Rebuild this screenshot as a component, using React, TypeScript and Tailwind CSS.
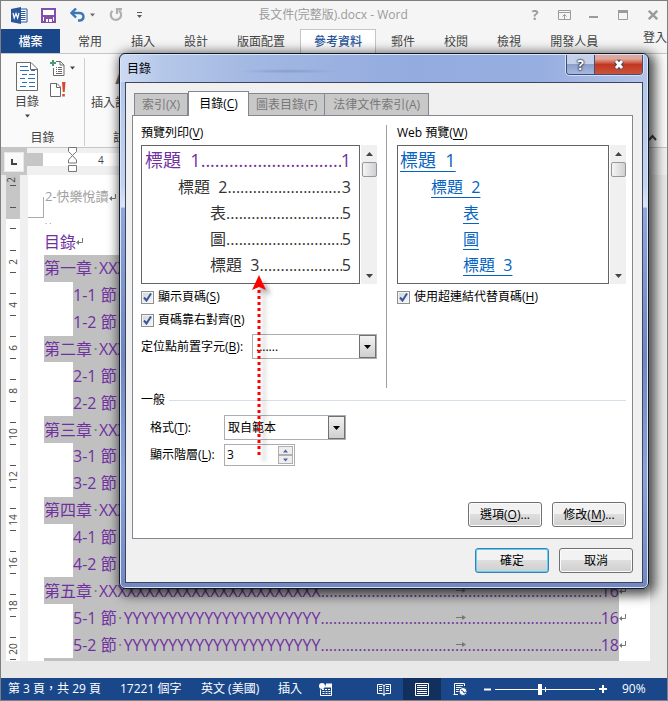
import { ReactNode, useState } from "react";
import clsx from "clsx";

const ribbonTabs = ["常用", "插入", "設計", "版面配置", "參考資料", "郵件", "校閱", "檢視", "開發人員"];

const chapters = [
  { name: "第一章", no: 1, page: 1, subPages: [1, 2] },
  { name: "第二章", no: 2, page: 4, subPages: [4, 6] },
  { name: "第三章", no: 3, page: 8, subPages: [8, 10] },
  { name: "第四章", no: 4, page: 12, subPages: [12, 14] },
  { name: "第五章", no: 5, page: 16, subPages: [16, 18] },
];

const dialogTabs = [
  { label: "索引", hotkey: "X" },
  { label: "目錄", hotkey: "C" },
  { label: "圖表目錄", hotkey: "F" },
  { label: "法律文件索引", hotkey: "A" },
];

const previewRows = [
  { text: "標題  1", page: 1, style: "h-[28px] pl-[3px] text-lg text-[#7030a0]", web: "h-[28px] pl-[2px] text-lg" },
  { text: "標題  2", page: 3, style: "h-[26px] pl-[36px] text-base", web: "h-[26px] pl-[33px] text-base" },
  { text: "表", page: 5, style: "h-[26px] pl-[68px] text-base", web: "h-[26px] pl-[65px] text-base" },
  { text: "圖", page: 5, style: "h-[26px] pl-[68px] text-base", web: "h-[26px] pl-[65px] text-base" },
  { text: "標題  3", page: 5, style: "h-[26px] pl-[68px] text-base", web: "h-[26px] pl-[65px] text-base" },
];

const dots = ".".repeat(200);

function Caret({ className }: { className?: string }) {
  return (
    <svg width="7" height="4" viewBox="0 0 7 4" className={className} aria-hidden="true">
      <path d="M0 0h7L3.500 4z" fill="currentColor" />
    </svg>
  );
}

function Hotkey({ label, hotkey, tail = "" }: { label: string; hotkey: string; tail?: string }) {
  return (
    <>
      {label}(<span className="underline underline-offset-2">{hotkey}</span>){tail}
    </>
  );
}

function TitleBar() {
  return (
    <header className="flex h-7 shrink-0 items-center bg-[#f5f5f5] text-[#9b9b9b]">
      <svg width="17" height="17" viewBox="0 0 17 17" className="ml-[10px]" aria-hidden="true">
        <path d="M8 2h8v13H8z" fill="#fff" stroke="#2b579a" />
        <path d="M10 4.500h4.500M10 6.500h4.500M10 8.500h4.500M10 10.500h4.500M10 12.500h4.500" stroke="#2b579a" />
        <path d="M0 2 10 0v17L0 15z" fill="#2b579a" />
        <path d="m2 6 1.200 5L5 6.500 6.600 11 8 6" fill="none" stroke="#fff" strokeWidth="1.200" />
      </svg>
      <button aria-label="儲存檔案" className="ml-[13px]">
        <svg width="15" height="15" viewBox="0 0 15 15">
          <path d="M1 1h13v13H1z" fill="#fff" stroke="#8250aa" strokeWidth="2" />
          <path d="M1 7h13v2H1zM3 9h9v5H3z" fill="#8250aa" />
          <path d="M5 11h2v3H5zM8 11h3v3H8z" fill="#fff" />
        </svg>
      </button>
      <button aria-label="復原" className="ml-[14px] flex items-center text-[#6a6a6a]">
        <svg width="15" height="14" viewBox="0 0 15 14">
          <path d="M2 5h7c6 0 5.500 7 1 7.500H8" fill="none" stroke="#3b76b5" strokeWidth="2.400" />
          <path d="M6 .500 1.500 5 6 9.500" fill="none" stroke="#3b76b5" strokeWidth="2.400" />
        </svg>
        <Caret className="ml-[5px] w-[5px]" />
      </button>
      <button aria-label="取消復原" className="ml-[14px]">
        <svg width="14" height="14" viewBox="0 0 14 14">
          <path d="M3.500 2.800A5.200 5.200 0 1 0 10 2.500" fill="none" stroke="#b0b0b0" strokeWidth="2.200" />
          <path d="M8 6V1.200h5" fill="none" stroke="#b0b0b0" strokeWidth="2.200" />
        </svg>
      </button>
      <button aria-label="自訂快速存取工具列" className="ml-[14px] text-[#5a5a5a]">
        <svg width="5" height="6" viewBox="0 0 5 6">
          <path d="M0 0h5v1H0zM0 3h5L2.500 6z" fill="currentColor" />
        </svg>
      </button>
      <h1 className="flex-1 pl-1 text-center text-xs">長文件(完整版).docx - Word</h1>
      <div className="flex items-center">
        <button aria-label="說明" className="w-[30px] text-sm leading-4 font-bold">?</button>
        <button aria-label="功能區顯示選項" className="flex w-[29px] justify-center">
          <svg width="13" height="10" viewBox="0 0 13 10" fill="none" stroke="currentColor">
            <path d="M.500.500h12v9H.500zM.500 2.500h12M6.500 9V4.500M4.500 6.500l2-2 2 2" />
          </svg>
        </button>
        <button aria-label="最小化" className="flex w-[29px] justify-center">
          <svg width="9" height="10" viewBox="0 0 9 10"><path d="M0 6h9v2H0z" fill="currentColor" /></svg>
        </button>
        <button aria-label="最大化" className="flex w-[30px] justify-center">
          <svg width="10" height="10" viewBox="0 0 10 10"><path d="M.500 2v7.500h9V2" fill="none" stroke="currentColor" /><path d="M0 0h10v3H0z" fill="currentColor" /></svg>
        </button>
        <button aria-label="關閉" className="flex w-[29px] justify-center">
          <svg width="10" height="10" viewBox="0 0 10 10"><path d="m.800.800 8.400 8.400M9.200.800.800 9.200" stroke="currentColor" strokeWidth="2.400" /></svg>
        </button>
      </div>
    </header>
  );
}

function RibbonTabs() {
  return (
    <nav className="flex h-[25px] shrink-0 overflow-hidden border-b border-[#c6c6c6] bg-[#f5f5f5] text-xs">
      <button className="mr-1 h-[25px] w-[59px] shrink-0 bg-[#19478a] font-medium text-white">檔案</button>
      <div className="flex gap-px">
        {ribbonTabs.map((tab) => (
          <button
            key={tab}
            className={clsx(
              "h-[26px] shrink-0 pb-px",
              tab === "參考資料" ? "border border-[#c6c6c6] bg-white px-[13px] font-medium text-[#2b579a]" : "px-[14px] text-[#444]",
            )}
          >
            {tab}
          </button>
        ))}
      </div>
      <button className="ml-auto h-[18px] w-6 whitespace-nowrap text-left text-[#444]">登入</button>
    </nav>
  );
}

function Ribbon() {
  return (
    <section className="flex h-[94px] shrink-0 items-start overflow-hidden border-b border-[#c6c6c6] bg-[#fafafa] text-xs leading-4 text-[#444]">
      <div className="mt-1 flex h-[88px] w-[84px] shrink-0 flex-col justify-between border-r border-[#d0d0d0]">
        <div className="flex">
          <button className="mt-1 ml-[11px] flex w-[30px] flex-col items-center">
            <svg width="22" height="29" viewBox="0 0 22 29" fill="none" aria-hidden="true">
              <path d="M.500.500H15L21.500 7v21.500H.500z" fill="#fff" stroke="#6a6a6a" />
              <path d="M14.500.500V7.500h7" stroke="#6a6a6a" />
              <path d="M4 4.500h8M4 8.500h9M6 12.500h5M4 16.500h5M6 20.500h5M4 24.500h6" stroke="#2b72b8" strokeWidth="1.200" />
              <path d="M15 8.500h4M13 12.500h6M12 16.500h7M13 20.500h6M13 24.500h6" stroke="#2b72b8" strokeWidth="1.200" />
            </svg>
            <span className="mt-[3px] whitespace-nowrap">目錄</span>
            <Caret className="mt-[4px] w-[5px]" />
          </button>
          <div className="ml-2 flex flex-col gap-[6px]">
            <button aria-label="新增文字" className="flex items-center gap-[5px] pt-[2px]">
              <svg width="15" height="16" viewBox="0 0 15 16" fill="none">
                <path d="M6 1.500h4.500L14 5v10.500H3.500V8" fill="#fff" stroke="#6a6a6a" />
                <path d="M10 1.500V5h4" stroke="#6a6a6a" />
                <path d="M6 7.500h1M8 7.500h4M6 9.500h1M8 9.500h4M6 11.500h1M8 11.500h4M6 13.500h6" stroke="#6a6a6a" />
                <path d="M3 0v6M0 3h6" stroke="#4a9c74" strokeWidth="2" />
              </svg>
              <Caret className="w-[5px]" />
            </button>
            <button aria-label="更新目錄">
              <svg width="16" height="15" viewBox="0 0 16 15" fill="none">
                <path d="M.500 1.500H7L10.500 5v9.500H.500z" fill="#fff" stroke="#6a6a6a" />
                <path d="M6.500 1.500V5.500h4" stroke="#6a6a6a" />
                <path d="M12 0h3.500l-.800 10h-1.900zM12.300 12h2.500v2.500h-2.500z" fill="#d8482a" />
              </svg>
            </button>
          </div>
        </div>
        <p className="text-center">目錄</p>
      </div>
      <div className="mt-1 flex h-[88px] w-20 flex-col items-center justify-between whitespace-nowrap">
        <button className="flex flex-col items-center">
          <span className="-mr-2 text-xl leading-[37px] font-bold text-[#6a6a6a]">AB</span>
          <span className="pr-5">插入註腳</span>
        </button>
        <p>註腳</p>
      </div>
      <button aria-label="摺疊功能區" className="mt-20 ml-auto pr-[10px]">
        <svg width="9" height="7" viewBox="0 0 9 7"><path d="m1 6 3.500-4L8 6" fill="none" stroke="#444" strokeWidth="2" /></svg>
      </button>
    </section>
  );
}

function VerticalRuler() {
  return (
    <div className="ml-[5px] w-[14px] shrink-0 overflow-hidden bg-white text-[10px] text-[#444] contain-size">
      <div className="flex h-11 flex-col items-center bg-[#c6c6c6]">
        <span className="h-[10px] -rotate-90 leading-[6px]">2</span>
        <span className="h-[22px] w-[6px] border-t border-[#555]" />
        <span className="w-[6px] border-t border-[#555]" />
      </div>
      <div className="mx-auto mt-[9px] h-[22px] w-[6px] border-t border-[#555]" />
      {[2, 4, 6, 8, 10, 12, 14, 16, 18, 20].map((n) => (
        <div key={n} className="h-[43px]">
          <div className="mx-auto w-[6px] border-t border-[#555]" />
          <div className="flex h-[21px] items-center justify-center"><span className="-rotate-90 leading-none">{n}</span></div>
          <div className="mx-auto w-[6px] border-t border-[#555]" />
        </div>
      ))}
    </div>
  );
}

function HorizontalRuler() {
  return (
    <div className="flex h-[27px] shrink-0 bg-[#f0f0f0]">
      <button aria-label="定位點" className="w-[26px] bg-[#c6c6c6] p-[3px]">
        <span className="flex h-[20px] items-center justify-center border border-[#e8e8e8] bg-[#fafafa]">
          <svg width="6" height="6" viewBox="0 0 6 6"><path d="M1 0v5h5" fill="none" stroke="#444" strokeWidth="2" /></svg>
        </span>
      </button>
      <div className="mt-[5px] flex h-[13px] flex-1 items-center bg-white text-[10px] leading-none text-[#444]">
        <div className="h-full w-4 bg-[#c6c6c6]" />
        <svg width="11" height="25" viewBox="0 0 11 25" className="ml-[24px] shrink-0" fill="#fff" stroke="#777">
          <path d="M1.500.500h8v4l-4 4-4-4zM5.500 8.500 1.500 13v3h8v-3zM1.500 18.500h8v6h-8z" />
        </svg>
        <span className="ml-[20px]">4</span>
      </div>
      <div className="w-[17px]" />
    </div>
  );
}

function Return({ className }: { className?: string }) {
  return (
    <span className={clsx("inline-flex shrink-0 items-center text-[#777]", className)}>
      <svg width="7" height="7" viewBox="0 0 7 7" aria-hidden="true">
        <path d="M6.500 0v4.500H2" fill="none" stroke="currentColor" /><path d="M3 2v5L0 4.500z" fill="currentColor" />
      </svg>
    </span>
  );
}

function TocLine({ children, page, sub }: { children: ReactNode; page: number; sub?: boolean }) {
  return (
    <a href="#toc" className={clsx("flex min-h-[26px]", sub ? "pl-[45px]" : "pl-4")}>
      <span className="flex min-w-0 flex-1 items-center bg-[#c0c0c0]">
        <span className="shrink-0 whitespace-pre">{children}</span>
        <span className="relative flex h-5 min-w-0 flex-1 items-center justify-center leading-5">
          <span className="h-5 w-full overflow-hidden">{dots}</span>
          <svg width="10" height="5" viewBox="0 0 10 5" className="absolute" aria-hidden="true">
            <path d="M0 2.500h8" stroke="#777" /><path d="M6 0v5l4-2.500z" fill="#777" />
          </svg>
        </span>
        <span className="shrink-0">{page}</span>
      </span>
      <Return className="w-[31px] self-center" />
    </a>
  );
}

function Mark() {
  return <span className="inline-block w-[7px] text-center text-[#777]">·</span>;
}

function DocumentPage() {
  return (
    <article className="flex min-w-0 flex-1 flex-col overflow-hidden bg-white text-base leading-none text-[#7030a0]">
      <div className="mt-3 flex h-[31px] shrink-0">
        <div className="h-[21px] w-4 self-end border-r border-b border-[#aaa]" />
        <p className="pl-px text-[13px] leading-[18px] text-[#a0a0a0]">2-快樂悅讀<Return /></p>
      </div>
      <p className="h-[10px] shrink-0 pl-[17px] text-[8px] leading-[6px] text-[#777]">. .</p>
      <h2 className="flex h-[27px] shrink-0 items-center pl-4">目錄<Return /></h2>
      <div id="toc" className="grid flex-1 auto-rows-fr grid-cols-1">
        {chapters.map((ch) => [
          <TocLine key={ch.name} page={ch.page}>{ch.name}<Mark />{"X".repeat(24)}</TocLine>,
          ...ch.subPages.map((page, i) => (
            <TocLine key={`${ch.no}-${i + 1}`} page={page} sub>{ch.no}-{i + 1} 節<Mark />{"Y".repeat(22)}</TocLine>
          )),
        ])}
      </div>
      <div className="mr-[31px] ml-4 h-[3px] shrink-0 bg-[#c0c0c0]" />
    </article>
  );
}

function CheckField({ label, hotkey }: { label: string; hotkey: string }) {
  const [checked, setChecked] = useState(true);
  return (
    <label className="flex h-4 items-center gap-1">
      <span className="grid size-[13px] place-items-center">
        <input
          type="checkbox"
          checked={checked}
          onChange={(e) => setChecked(e.target.checked)}
          className="col-start-1 row-start-1 size-[13px] appearance-none border border-[#8e8f8f] bg-linear-to-br from-[#d0d5dc] to-[#f8f8f8] shadow-[inset_0_0_0_1px_#f4f4f4]"
        />
        {checked && (
          <svg width="9" height="9" viewBox="0 0 9 9" className="pointer-events-none col-start-1 row-start-1">
            <path d="m1 4.500 2.500 3L8 .500" fill="none" stroke="#3a5595" strokeWidth="2" />
          </svg>
        )}
      </span>
      <span><Hotkey label={label} hotkey={hotkey} /></span>
    </label>
  );
}

function Combo({ id, value, className }: { id: string; value: string; className: string }) {
  return (
    <div className={clsx("flex h-[25px] border border-[#abadb3] bg-white", className)}>
      <select id={id} className="min-w-0 flex-1 appearance-none pl-[3px] outline-none">
        <option>{value}</option>
      </select>
      <label htmlFor={id} className="flex w-[17px] items-center justify-center border border-[#707070] bg-linear-to-b from-[#f2f2f2] to-[#cfcfcf]">
        <Caret />
      </label>
    </div>
  );
}

function ScrollBar() {
  return (
    <div className="ml-px flex w-4 shrink-0 flex-col items-center bg-[#f0f0f0]">
      <button aria-label="向上捲動" className="flex h-[17px] items-center"><Caret className="w-[7px] rotate-180 text-[#444]" /></button>
      <div className="h-[15px] w-[15px] rounded-xs border border-[#979797] bg-linear-to-r from-[#f5f5f5] to-[#d0d0d4]" />
      <button aria-label="向下捲動" className="mt-auto flex h-[17px] items-center"><Caret className="w-[7px] text-[#444]" /></button>
    </div>
  );
}

function PushButton({ children, primary }: { children: ReactNode; primary?: boolean }) {
  return (
    <button
      className={clsx(
        "h-[25px] w-[74px] rounded-[3px] border bg-linear-to-b from-[#f2f2f2] from-50% via-[#dedede] via-50% to-[#cfcfcf]",
        primary ? "border-[#3c7fb1] shadow-[inset_0_0_0_1px_#5fd0f2]" : "border-[#707070] shadow-[inset_0_0_0_1px_#fbfbfb]",
      )}
    >
      {children}
    </button>
  );
}

function TocDialog() {
  const [levels, setLevels] = useState(3);
  return (
    <section
      role="dialog"
      aria-label="目錄"
      className="absolute top-[52px] right-[18px] left-[118px] rounded-md border border-[#101828] bg-[linear-gradient(180deg,#b0c4e8_0px,#c3d2ee_130px,#dbe6f8_153px,#8fa8dc_154px,#6f86be_300px,#8aa4d8_420px,#7388c0)] px-[5px] pb-[5px] text-xs leading-4 text-black shadow-[3px_3px_12px_3px_rgba(0,0,0,0.7),inset_0_0_0_1px_#d8e4f8]"
    >
      <div className="-mx-1 mt-px flex h-[27px] items-start rounded-t bg-[radial-gradient(ellipse_at_32%_60%,#869dcf_0,transparent_10%),linear-gradient(90deg,#cddaf2,#b5c7e9_8%,#a3b8e2_25%,#93abdf_55%,#97aee0_80%,#b4c4e8)]">
        <h2 className="pt-[6px] pl-1.5">目錄</h2>
        <div className="mr-1 ml-auto flex h-5 overflow-hidden rounded-b border border-t-0 border-[#3f4e78] text-white shadow-[0_0_0_1px_#d5e0f5]">
          <button aria-label="說明" className="w-7 border-r border-[#3f4e78] bg-linear-to-b from-[#c5d1ea] from-50% via-[#8c9fca] via-50% to-[#a7b9df] text-sm leading-[18px] font-bold [text-shadow:0_0_2px_#000,0_0_2px_#000]">?</button>
          <button aria-label="關閉" className="flex w-[47px] items-center justify-center bg-linear-to-b from-[#e0a79c] from-20% via-[#c2361f] via-50% to-[#c9543c]">
            <svg width="12" height="11" viewBox="0 0 12 11">
              <path d="m3 2 6 7M9 2 3 9" stroke="#444a60" strokeWidth="5" />
              <path d="m3 2 6 7M9 2 3 9" stroke="#fff" strokeWidth="2.800" />
            </svg>
          </button>
        </div>
      </div>
      <div className="border border-[#3c4560] bg-[#f0f0f0] pt-2 pr-[9px] pb-[9px] pl-1.5">
        <div role="tablist" className="relative -mb-px flex h-[25px] items-end pl-[2px]">
          {dialogTabs.map((tab) =>
            tab.hotkey === "C" ? (
              <button key={tab.label} role="tab" aria-selected="true" className="h-[25px] w-[61px] border border-b-0 border-[#828790] bg-white">
                <Hotkey label={tab.label} hotkey={tab.hotkey} />
              </button>
            ) : (
              <button key={tab.label} role="tab" aria-selected="false" className="h-[23px] border border-[#828790] bg-[#c8c8c8] px-[7px] text-[#777] not-first:border-l-0 last:px-2">
                {tab.label}({tab.hotkey})
              </button>
            ),
          )}
        </div>
        <div className="border border-[#828790] bg-white pt-[9px] pr-1.5 pb-[11px] pl-2">
          <div className="grid grid-cols-[245px_1fr]">
            <div className="pr-[9px] pb-[29px]">
              <p className="mb-1"><Hotkey label="預覽列印" hotkey="V" /></p>
              <div className="flex h-[139px]">
                <div className="min-w-0 flex-1 overflow-hidden border border-[#646464] pr-2 text-[#333]">
                  {previewRows.map((row) => (
                    <div key={row.text} className={clsx("flex items-center leading-6", row.style)}>
                      <span className="shrink-0 whitespace-pre">{row.text}</span>
                      <span className="h-6 min-w-0 flex-1 overflow-hidden leading-6">{dots}</span>
                      <span>{row.page}</span>
                    </div>
                  ))}
                </div>
                <ScrollBar />
              </div>
              <div className="mt-[5px] mb-1.5 flex flex-col gap-[7px]">
                <CheckField label="顯示頁碼" hotkey="S" />
                <CheckField label="頁碼靠右對齊" hotkey="R" />
              </div>
              <div className="flex items-center justify-between">
                <label htmlFor="leader"><Hotkey label="定位點前置字元" hotkey="B" tail=":" /></label>
                <Combo id="leader" value="......." className="w-[125px]" />
              </div>
            </div>
            <div className="border-l border-[#a0a0a0] pl-[10px]">
              <p className="mb-1">Web <Hotkey label="預覽" hotkey="W" /></p>
              <div className="flex h-[139px]">
                <div className="min-w-0 flex-1 overflow-hidden border border-[#646464]">
                  {previewRows.map((row) => (
                    <div key={row.text} className={clsx("flex items-center leading-6", row.web)}>
                      <a href="#toc" className="whitespace-pre text-[#0563c1] underline underline-offset-4">{row.text}</a>
                    </div>
                  ))}
                </div>
                <ScrollBar />
              </div>
              <div className="mt-[5px]"><CheckField label="使用超連結代替頁碼" hotkey="H" /></div>
            </div>
          </div>
          <div className="mt-1 mb-[7px] flex items-center gap-1">
            <h3>一般</h3>
            <div className="flex-1 border-t border-[#d5dfe5]" />
          </div>
          <div className="flex items-center">
            <label htmlFor="format" className="w-[83px] pl-[9px]"><Hotkey label="格式" hotkey="T" tail=":" /></label>
            <Combo id="format" value="取自範本" className="w-[122px]" />
          </div>
          <div className="mt-1 flex items-center">
            <label htmlFor="levels" className="w-[83px] pl-[9px] whitespace-nowrap"><Hotkey label="顯示階層" hotkey="L" tail=":" /></label>
            <div className="flex h-[22px] w-[71px] border border-[#abadb3] p-px">
              <input id="levels" value={levels} onChange={(e) => setLevels(Number(e.target.value) || 1)} className="w-0 min-w-0 flex-1 pl-px outline-none" />
              <div className="flex w-[15px] flex-col text-[#4a63a8]">
                <button aria-label="增加" onClick={() => setLevels(Math.min(9, levels + 1))} className="flex flex-1 items-center justify-center border border-[#b0b0b0] bg-[#eee]"><Caret className="w-[5px] rotate-180" /></button>
                <button aria-label="減少" onClick={() => setLevels(Math.max(1, levels - 1))} className="flex flex-1 items-center justify-center border border-[#b0b0b0] bg-[#eee]"><Caret className="w-[5px]" /></button>
              </div>
            </div>
          </div>
          <div className="mt-9 flex justify-end gap-[10px]">
            <PushButton><Hotkey label="選項" hotkey="O" tail="..." /></PushButton>
            <PushButton><Hotkey label="修改" hotkey="M" tail="..." /></PushButton>
          </div>
        </div>
        <div className="mt-[9px] flex justify-end gap-[10px]">
          <PushButton primary>確定</PushButton>
          <PushButton>取消</PushButton>
        </div>
      </div>
      {/* callout from the level count up to the preview */}
      <svg width="26" height="190" viewBox="0 0 26 190" className="pointer-events-none absolute top-[221px] left-[131px] drop-shadow-[5px_5px_2px_rgba(0,0,0,0.3)]" aria-hidden="true">
        <path d="M8 180V12" stroke="#f00" strokeWidth="3" strokeDasharray="3 3" />
        <path d="M8 0l7 15-7-3-7 3z" fill="#f00" />
      </svg>
    </section>
  );
}

function StatusBar() {
  return (
    <footer className="flex h-[22px] shrink-0 items-center bg-[#19478a] text-xs whitespace-nowrap text-white">
      <span className="w-[112px] pl-[7px]">第 3 頁，共 29 頁</span>
      <span className="w-[81px] pl-[7px]">17221 個字</span>
      <span className="w-[77px] pl-[7px]">英文 (美國)</span>
      <span className="w-[48px] pl-[7px]">插入</span>
      <svg width="13" height="13" viewBox="0 0 13 13" aria-hidden="true">
        <path d="M7 1h6v3H6M1.500 6.500v6h11V3" fill="none" stroke="#fff" />
        <path d="M7 1h6v3H6z" fill="#fff" />
        <circle cx="3" cy="3" r="3" fill="#fff" />
        <path d="M3 6.500h9M3.500 8.500h8M3.500 10.500h8" stroke="#fff" strokeDasharray="2 1" />
      </svg>
      <div className="ml-auto flex h-full items-center">
        <button aria-label="閱讀模式" className="mr-[12px]">
          <svg width="14" height="13" viewBox="0 0 14 13" fill="none" stroke="#fff">
            <path d="M.500 1.500H5l2 1 2-1h4.500v9H9l-2 1-2-1H.500zM7 2v11" />
            <path d="M2 3.500h3M2 5.500h3M2 7.500h3M9 3.500h3M9 5.500h3M9 7.500h3" />
          </svg>
        </button>
        <button aria-label="整頁模式" className="flex h-full w-[38px] items-center justify-center bg-[#12305d]">
          <svg width="14" height="13" viewBox="0 0 14 13" fill="none" stroke="#fff">
            <path d="M.500.500h13v12H.500zM2 2.500h10M2 4.500h10M2 6.500h10M2 8.500h10M2 10.500h10" />
          </svg>
        </button>
        <button aria-label="Web 版面配置" className="ml-[12px]">
          <svg width="15" height="13" viewBox="0 0 15 13" fill="none" stroke="#fff">
            <path d="M5 11.500H.500M1.500 11V.500h10V3M3 2.500h7M3 4.500h7M3 6.500h4M3 8.500h3" />
            <circle cx="10" cy="8.500" r="4" fill="#fff" stroke="#19478a" />
            <path d="M8 7l2 1 1 2 2-1" stroke="#19478a" />
          </svg>
        </button>
        <button aria-label="縮小" className="ml-4 flex"><svg width="7" height="7"><path d="M0 2.500h7v2H0z" fill="#fff" /></svg></button>
        <input
          type="range"
          aria-label="縮放"
          min="10"
          max="192"
          defaultValue="92"
          className="ml-1 h-3 w-[100px] appearance-none bg-[linear-gradient(#fff,#fff),linear-gradient(#fff,#fff)] bg-[length:100%_1px,1px_5px] bg-center bg-no-repeat [&::-webkit-slider-thumb]:h-[11px] [&::-webkit-slider-thumb]:w-1 [&::-webkit-slider-thumb]:appearance-none [&::-webkit-slider-thumb]:bg-white"
        />
        <button aria-label="放大" className="ml-1 flex"><svg width="8" height="8"><path d="M0 3h8v2H0zM3 0h2v8H3z" fill="#fff" /></svg></button>
        <span className="w-[60px] pl-[15px]">90%</span>
      </div>
    </footer>
  );
}

export default function App() {
  return (
    <main className="relative flex min-h-screen flex-col overflow-hidden border border-[#7f7f7f] bg-[#e8e8e8] font-['Open_Sans','Noto_Sans_CJK_TC',sans-serif]">
      <TitleBar />
      <RibbonTabs />
      <Ribbon />
      <HorizontalRuler />
      <div className="flex flex-1">
        <VerticalRuler />
        <div className="w-[8px] shrink-0 bg-[#f0f0f0]" />
        <DocumentPage />
        <div className="w-[17px] shrink-0" />
      </div>
      <div className="h-[17px] shrink-0" />
      <StatusBar />
      <TocDialog />
    </main>
  );
}
